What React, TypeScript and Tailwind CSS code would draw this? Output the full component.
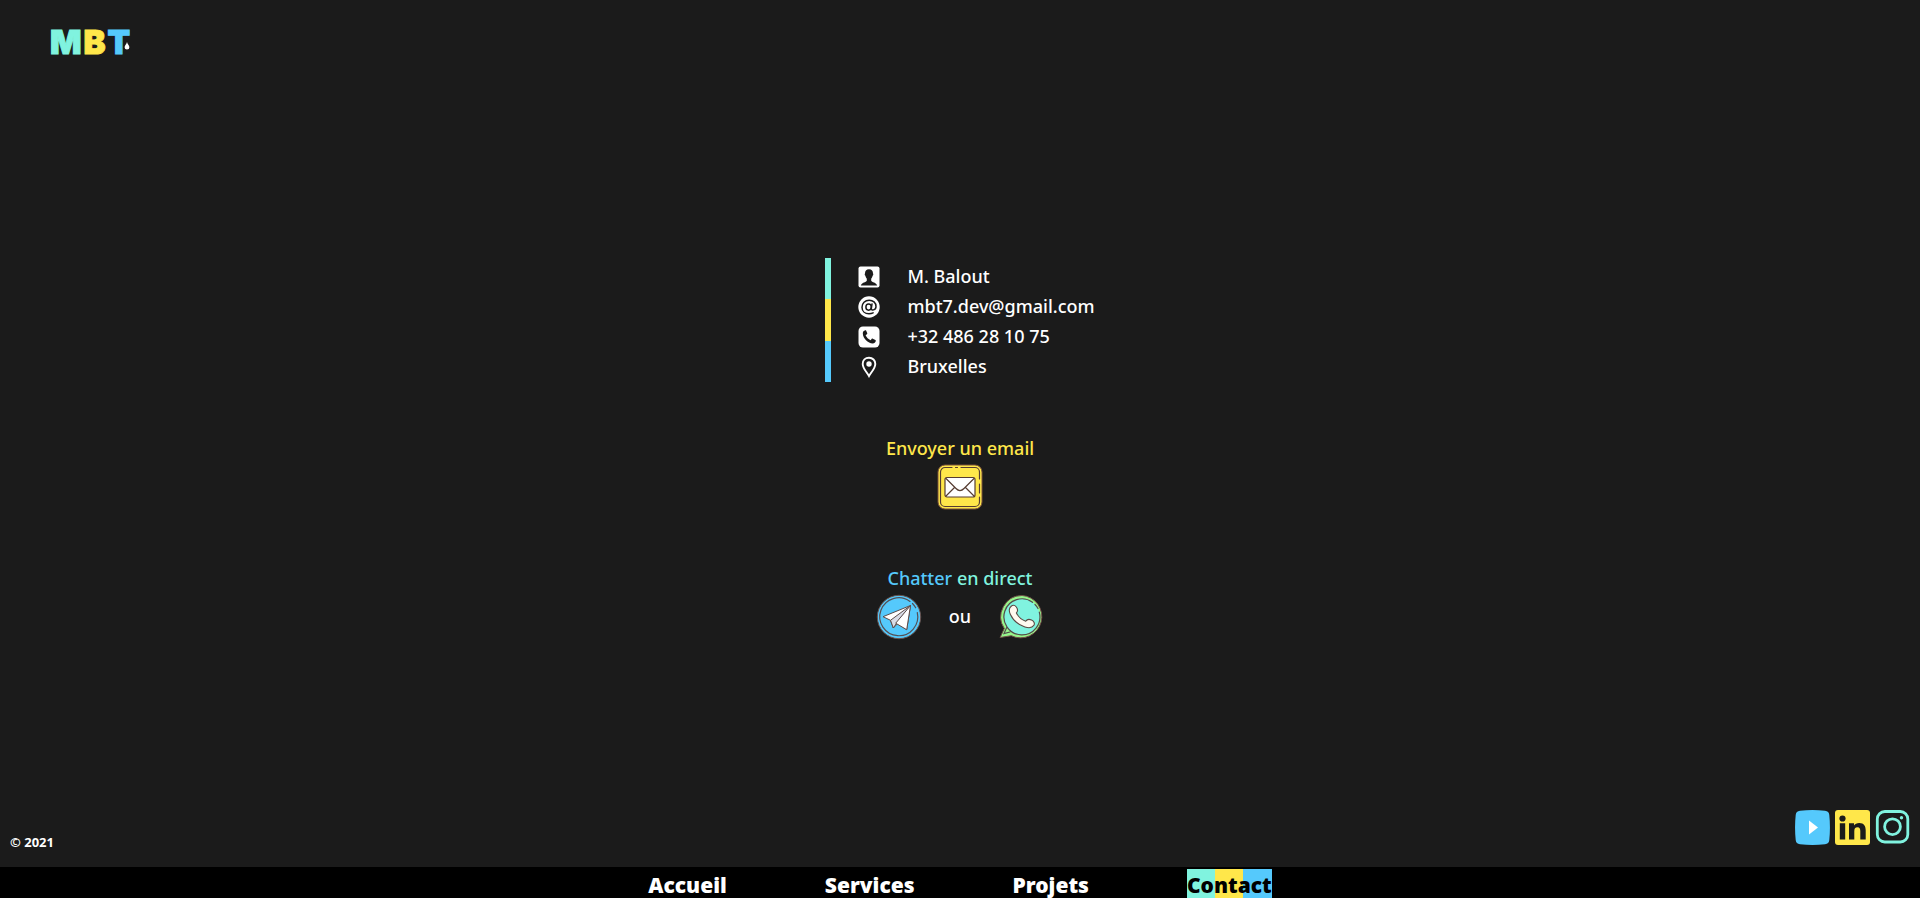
import React from "react";

const CONTACT_ROWS = [
  { icon: <PersonIcon />, text: "M. Balout" },
  { icon: <AtIcon />, text: "mbt7.dev@gmail.com" },
  { icon: <PhoneIcon />, text: "+32 486 28 10 75" },
  { icon: <PinIcon />, text: "Bruxelles" },
];

function PersonIcon() {
  return (
    <svg viewBox="0 0 22 22" className="size-[22px]" aria-hidden="true">
      <rect x="0.5" y="0.5" width="21" height="21" rx="2" fill="#fff" />
      <path
        d="M11 3.2c-2.700 0-4.100 1.800-4 4.200-.5.2-.4 2 .4 2.300.3 1.500.9 2.400 1.400 2.900v2.100c-.7 1.600-5 1.700-6 4.800h16.400c-1-3.100-5.300-3.200-6-4.800v-2.100c.5-.5 1.100-1.400 1.400-2.900.8-.3.9-2.100.4-2.300.1-2.400-1.300-4.200-4-4.200z"
        fill="#1b1b1b"
      />
    </svg>
  );
}

function AtIcon() {
  return (
    <svg viewBox="0 0 22 22" className="size-[22px]" fill="none" aria-hidden="true">
      <circle cx="11" cy="11" r="10.700" fill="#fff" />
      <g stroke="#1b1b1b" strokeWidth="1.500" strokeLinecap="round">
        <ellipse cx="10.600" cy="11.100" rx="2.700" ry="3.100" />
        <path d="M14 7.900l-.7 4.800c-.2 2.200 4.700 1.700 4.700-2.200 0-3.800-3-6.300-6.800-6.300-4.200 0-7.200 3-7.200 7 0 4 3 6.600 7 6.600 1.600 0 2.900-.3 4.100-.9" />
      </g>
    </svg>
  );
}

function PhoneIcon() {
  return (
    <svg viewBox="0 0 22 22" className="size-[22px]" aria-hidden="true">
      <rect x="0.500" y="0.500" width="21" height="21" rx="4.500" fill="#fff" />
      <path
        d="M7.300 4.300c-1.500.4-2.600 1.400-2.500 3.100.3 5.100 5 9.800 10 10 1.500 0 2.600-1 3-2.500.1-.4 0-.8-.4-1l-2.600-1.200c-.5-.2-.9-.1-1.200.3l-1 1.300c-2.300-1.100-4-2.800-5-5l1.300-1c.4-.3.5-.8.3-1.200L8.200 4.700c-.2-.4-.5-.5-.9-.4z"
        fill="#1b1b1b"
      />
    </svg>
  );
}

function PinIcon() {
  return (
    <svg viewBox="0 0 22 22" className="size-[22px]" aria-hidden="true">
      <path
        d="M11 1.700c-3.700 0-6.300 2.700-6.300 6.200 0 4.400 4.200 8.400 6.300 12.200 2.100-3.800 6.300-7.800 6.300-12.200 0-3.500-2.600-6.200-6.300-6.200z"
        fill="none"
        stroke="#fff"
        strokeWidth="1.900"
      />
      <circle cx="11" cy="8" r="2.700" fill="#fff" />
    </svg>
  );
}

function MailIcon() {
  return (
    <svg viewBox="0 0 46 46" className="size-[46px]" fill="none" aria-hidden="true">
      <rect x="1" y="1" width="44" height="44" rx="7" fill="#ffe74a" stroke="#795039" strokeWidth="1" />
      <g stroke="#573d32" strokeWidth="1.200" strokeLinecap="round" strokeLinejoin="round">
        <path d="M15 3.500H8a4.500 4.500 0 0 0-4.500 4.500v30A4.500 4.500 0 0 0 8 42.500h30a4.500 4.500 0 0 0 4.500-4.500v-5M18.500 3.500h2M24 3.500h14A4.500 4.500 0 0 1 42.500 8v7M42.500 20v9" />
        <rect x="8" y="13.500" width="30" height="19.500" rx="2" fill="#fff" />
        <path d="M9 14.500l10 10c2.500 2.700 5.500 2.700 8 0l10-10M9 32l8.500-8.500M37 32l-8.500-8.500" />
      </g>
    </svg>
  );
}

function TelegramIcon() {
  return (
    <svg viewBox="0 0 46 46" className="size-[46px]" fill="none" aria-hidden="true">
      <circle cx="23" cy="23" r="21.700" fill="#55c9fc" stroke="#66504c" strokeWidth="1" />
      <path
        d="M41.300 18.500A19 19 0 1 1 34 7.400M36.500 9.500a19 19 0 0 1 3.200 4.300"
        stroke="#554f54"
        strokeWidth="1.200"
        strokeLinecap="round"
      />
      <g stroke="#5c4c4b" strokeWidth="1" strokeLinejoin="round">
        <path d="M34.500 11.500L7 22.700l7.500 3.600 2.800 7.700 4.200-4.300 9.200 6z" fill="#fff" />
        <path d="M14.500 26.300l20-14.800-14 17.800-3.200 4.700z" fill="#d8dce7" />
        <path d="M34.500 11.500L19.700 29.200l11 6.500z" fill="#fff" />
      </g>
    </svg>
  );
}

function WhatsAppIcon() {
  return (
    <svg viewBox="0 0 46 46" className="size-[46px]" fill="none" aria-hidden="true">
      <path
        d="M24 1.500A21.300 21.300 0 0 0 6.300 34.500L2.100 43.500l11.200-1.800A21.200 21.200 0 1 0 24 1.500z"
        fill="#96f58b"
        stroke="#725048"
        strokeWidth="1"
      />
      <circle cx="23.800" cy="22.700" r="18" fill="#80f3df" />
      <path
        d="M41.300 18.200A18 18 0 1 1 34.500 8.300M37 10.500a18 18 0 0 1 3 4M8.700 33.500L6 39.500l6-1.500"
        stroke="#524c4a"
        strokeWidth="1.200"
        strokeLinecap="round"
      />
      <path
        d="M13.200 12.200c-2.600 2-2.300 5-.8 8.300 3 6.300 8 10.500 14.500 12.500 4 1.200 7.300 1 9-1.700 1.200-2-.2-4.300-2.400-5.300-2.500-1.100-4.600-.6-5.800 1.200-4-1.300-7.400-4.500-9.300-8.300 1.600-1.700 1.300-4-.1-5.900-1.500-1.900-3.300-2.200-5.100-.8z"
        fill="#fffaf0"
        stroke="#5b4943"
        strokeWidth="1.100"
        strokeLinejoin="round"
      />
    </svg>
  );
}

function YoutubeIcon() {
  return (
    <svg viewBox="0 0 35 35" className="size-[35px]" aria-hidden="true">
      <path
        d="M5 .8Q17.500-.6 30 .8 34 1.200 34.300 5 35.600 17.500 34.300 30 34 33.800 30 34.200 17.500 35.600 5 34.200 1 33.800.7 30-.6 17.500.7 5 1 1.200 5 .8z"
        fill="#55c9fc"
      />
      <path d="M14 10.500v14l9-7z" fill="#fff" />
    </svg>
  );
}

function LinkedinIcon() {
  return (
    <svg viewBox="0 0 35 35" className="size-[35px]" aria-hidden="true">
      <rect width="35" height="35" rx="3" fill="#ffe74a" />
      <circle cx="7.500" cy="8.500" r="3.100" fill="#1b1b1b" />
      <path
        d="M4.800 13.300h5.400V29.500H4.800zM14 13.300h5v2.200c1-1.700 2.800-2.600 5.200-2.600 5 0 6.500 3.200 6.500 7.600v9h-5.400v-8.200c0-2.200-.4-4-2.800-4s-3.200 1.600-3.200 4v8.200H14z"
        fill="#1b1b1b"
      />
    </svg>
  );
}

function InstagramIcon() {
  return (
    <svg viewBox="0 0 35 35" className="size-[35px]" fill="none" aria-hidden="true">
      <rect x="2.300" y="1.500" width="30.500" height="30.500" rx="7.500" stroke="#80f3df" strokeWidth="2.800" />
      <circle cx="17.500" cy="16.700" r="7.900" stroke="#80f3df" strokeWidth="2.800" />
      <circle cx="26.500" cy="7.800" r="1.700" fill="#80f3df" />
    </svg>
  );
}

function Logo() {
  return (
    <a
      href="#accueil"
      aria-label="MBT"
      className="relative flex gap-0.5 font-['Inter',sans-serif] text-[33px] leading-8 font-black [-webkit-text-stroke:1px]"
    >
      <span className="text-[#80f3df]">M</span>
      <span className="text-[#ffe74a]">B</span>
      <span className="text-[#55c9fc]">T</span>
      <svg viewBox="0 0 6 8" className="absolute right-0 bottom-2 h-2 w-1.5" aria-hidden="true">
        <path d="M3 0C2.600 2 .6 3.400.6 5.200a2.400 2.400 0 0 0 4.800 0C5.400 3.400 3.400 2 3 0z" fill="#fff" />
      </svg>
    </a>
  );
}

const NAV_ITEMS = ["Accueil", "Services", "Projets", "Contact"];

export default function App() {
  return (
    <div className="flex min-h-screen flex-col bg-[#1b1b1b] font-['Noto_Sans',sans-serif] text-white">
      <header className="flex px-[50px] pt-[26px]">
        <Logo />
      </header>

      <main className="flex flex-1 flex-col items-center pt-[200px] text-[18px] font-medium">
        <section className="flex gap-[27px]">
          <div className="flex w-1.5 flex-col">
            <div className="flex-1 bg-[#80f3df]" />
            <div className="flex-1 bg-[#ffe74a]" />
            <div className="flex-1 bg-[#55c9fc]" />
          </div>
          <ul className="pt-1">
            {CONTACT_ROWS.map((row) => (
              <li key={row.text} className="flex items-center gap-[27px]">
                {row.icon}
                <span className="pb-0.5 leading-7">{row.text}</span>
              </li>
            ))}
          </ul>
        </section>

        <section className="mt-[50px] flex flex-col items-center">
          <h2 className="leading-8 text-[#ffe74a]">Envoyer un email</h2>
          <a href="mailto:mbt7.dev@gmail.com" aria-label="Envoyer un email">
            <MailIcon />
          </a>
        </section>

        <section className="mt-[52px] flex flex-col items-center">
          <h2 className="leading-8 text-[#80f3df]">
            <span className="text-[#55c9fc]">Chatter</span> en direct
          </h2>
          <div className="flex items-center gap-[27px]">
            <a href="#telegram" aria-label="Telegram">
              <TelegramIcon />
            </a>
            <span className="pb-0.5 leading-7">ou</span>
            <a href="#whatsapp" aria-label="WhatsApp">
              <WhatsAppIcon />
            </a>
          </div>
        </section>
      </main>

      <footer className="flex items-end justify-between px-2.5 pb-[15px]">
        <small className="text-[13px] leading-5 font-bold">© 2021</small>
        <div className="flex gap-[5px] pb-[7px]">
          <a href="#youtube" aria-label="YouTube">
            <YoutubeIcon />
          </a>
          <a href="#linkedin" aria-label="LinkedIn">
            <LinkedinIcon />
          </a>
          <a href="#instagram" aria-label="Instagram">
            <InstagramIcon />
          </a>
        </div>
      </footer>

      <nav className="flex justify-center gap-[98px] bg-black pt-0.5 text-[21px] leading-[26px] font-black">
        {NAV_ITEMS.map((item) => (
          <a
            key={item}
            href={"#" + item.toLowerCase()}
            className={
              item === "Contact"
                ? "bg-[linear-gradient(to_right,#80f3df_33%,#ffe74a_33%_66%,#55c9fc_66%)] pt-[3px] text-black"
                : "pt-[3px]"
            }
          >
            {item}
          </a>
        ))}
      </nav>
    </div>
  );
}
